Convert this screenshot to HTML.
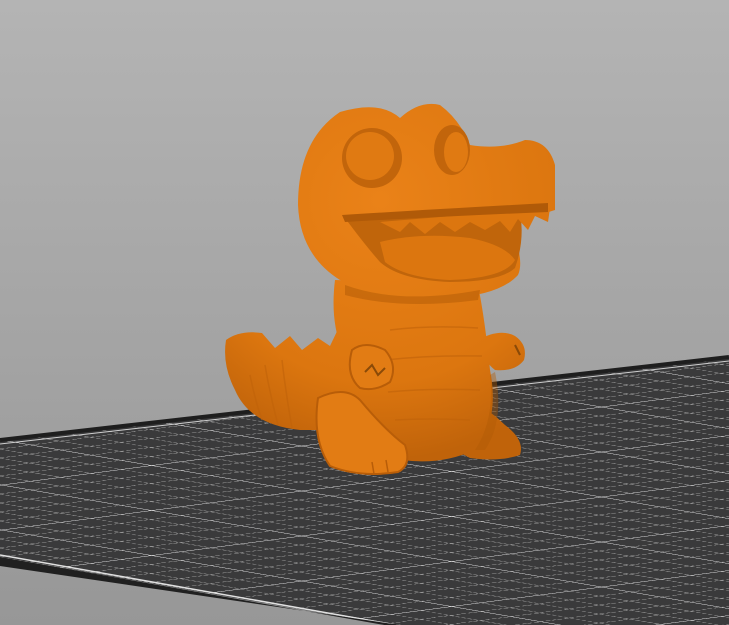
<!DOCTYPE html>
<html><head><meta charset="utf-8"><style>html,body{margin:0;padding:0;width:729px;height:625px;overflow:hidden}</style></head>
<body>
<svg width="729" height="625" viewBox="0 0 729 625" xmlns="http://www.w3.org/2000/svg">
<defs>
<linearGradient id="bg" x1="0" y1="0" x2="0" y2="1">
<stop offset="0" stop-color="#b4b4b4"/><stop offset="1" stop-color="#979797"/>
</linearGradient>
<pattern id="grid" width="150" height="150" patternUnits="userSpaceOnUse" patternTransform="matrix(1 -0.13 1 0.17 0 440)">
<path d="M0 30H150M0 60H150M0 90H150M0 120H150M30 0V150M60 0V150M90 0V150M120 0V150" stroke="#a0a0a0" stroke-width="2" fill="none" stroke-dasharray="4 2"/>
<path d="M0 0.5H150M0.5 0V150" stroke="#e0e0e0" stroke-width="2.5" fill="none"/>
</pattern>
<radialGradient id="og" gradientUnits="userSpaceOnUse" cx="380" cy="200" r="260">
<stop offset="0" stop-color="#ea8218"/><stop offset="0.7" stop-color="#dc760f"/><stop offset="1" stop-color="#c0630a"/>
</radialGradient>
</defs>
<rect width="729" height="625" fill="url(#bg)"/>
<polygon points="0,440 729,357 729,625 390,625 0,557" fill="#3a3a3b"/>
<polygon points="0,440 729,357 729,625 390,625 0,557" fill="url(#grid)" opacity="0.9"/>
<polyline points="0,440 729,357" stroke="#1e1e1e" stroke-width="4" fill="none"/>
<polyline points="0,444 729,361" stroke="#cfcfcf" stroke-width="1" fill="none"/>
<polyline points="0,555 390,624" stroke="#e0e0e0" stroke-width="1.5" fill="none"/>
<polygon points="0,557 390,626 400,625 0,566" fill="#202020"/>
<g fill="url(#og)">
<path d="M226 340 Q240 330 262 333 L275 348 L290 336 L302 350 L318 338 L330 346 L340 325 L360 330 L360 430 L300 430 Q250 425 235 390 Q222 365 226 340Z"/>
<path d="M335 280 Q330 320 342 350 Q340 420 380 455 Q430 470 475 450 Q500 420 490 370 Q485 320 478 285 Z"/>
<path d="M340 112 Q380 100 400 118 Q420 100 440 105 Q460 120 470 145 Q500 150 525 140 Q548 140 555 165 L555 210 Q540 215 525 218 L510 225 Q525 260 518 275 Q500 295 450 298 Q380 300 340 280 Q300 255 298 205 Q298 140 340 112Z"/>
<path d="M478 340 Q500 328 515 336 Q528 345 524 360 Q515 372 495 370 Q482 360 478 340Z"/>
<path d="M470 400 Q490 410 505 425 Q525 440 520 455 Q500 462 470 458 L455 450 Z"/>
</g>
<path d="M345 218 L520 212 Q525 240 515 268 Q500 282 450 282 Q400 280 380 262 Q365 245 345 218Z" fill="#c0650b"/>
<path d="M380 242 Q420 232 470 238 Q505 245 515 260 Q505 278 450 280 Q405 278 385 262Z" fill="#dc760f"/>
<path d="M380 222 L400 232 L410 222 L425 234 L440 222 L455 232 L470 222 L485 230 L500 221 L510 232 L518 219 L528 230 L535 216 L548 222 L550 208 Z" fill="#dc760f"/>
<path d="M342 215 Q420 210 548 203 L548 212 Q450 216 345 222Z" fill="#b05a08"/>
<circle cx="372" cy="158" r="30" fill="#c2650b"/>
<circle cx="370" cy="156" r="24" fill="#e07a12"/>
<ellipse cx="452" cy="150" rx="18" ry="25" fill="#c2650b"/>
<ellipse cx="456" cy="152" rx="12" ry="20" fill="#e07a12"/>
<path d="M345 285 Q400 305 480 290 L478 300 Q400 310 345 295Z" fill="#b05a06" opacity="0.5"/>
<path d="M490 375 Q495 420 475 450 L485 450 Q505 420 495 372Z" fill="#b05a06" opacity="0.4"/>
<!-- belly lines -->
<path d="M390 330 Q430 325 478 328 M385 360 Q430 355 482 356 M388 392 Q430 388 480 390 M395 420 Q430 418 470 420" stroke="#c0630a" stroke-width="1.5" fill="none" opacity="0.6"/>
<path d="M250 375 Q255 400 262 420 M265 365 Q270 395 278 425 M282 360 Q286 395 292 428" stroke="#c0630a" stroke-width="1.5" fill="none" opacity="0.6"/>
<!-- left foot -->
<path d="M318 398 Q345 385 360 400 Q385 430 405 445 Q412 465 398 472 Q360 478 330 466 Q312 440 318 398Z" fill="#e27c14" stroke="#b85d08" stroke-width="2"/>
<path d="M372 462 L374 474 M386 460 L388 472" stroke="#b85d08" stroke-width="1.5"/>
<!-- left arm -->
<path d="M352 350 Q365 340 385 350 Q398 365 390 382 Q375 392 360 388 Q345 375 352 350Z" fill="#e27c14" stroke="#b85d08" stroke-width="2"/>
<path d="M365 372 L372 365 L378 375 L385 368" stroke="#8a4a08" stroke-width="2" fill="none"/>
<path d="M515 345 L520 355" stroke="#8a4a08" stroke-width="2"/>
</svg>
</body></html>
